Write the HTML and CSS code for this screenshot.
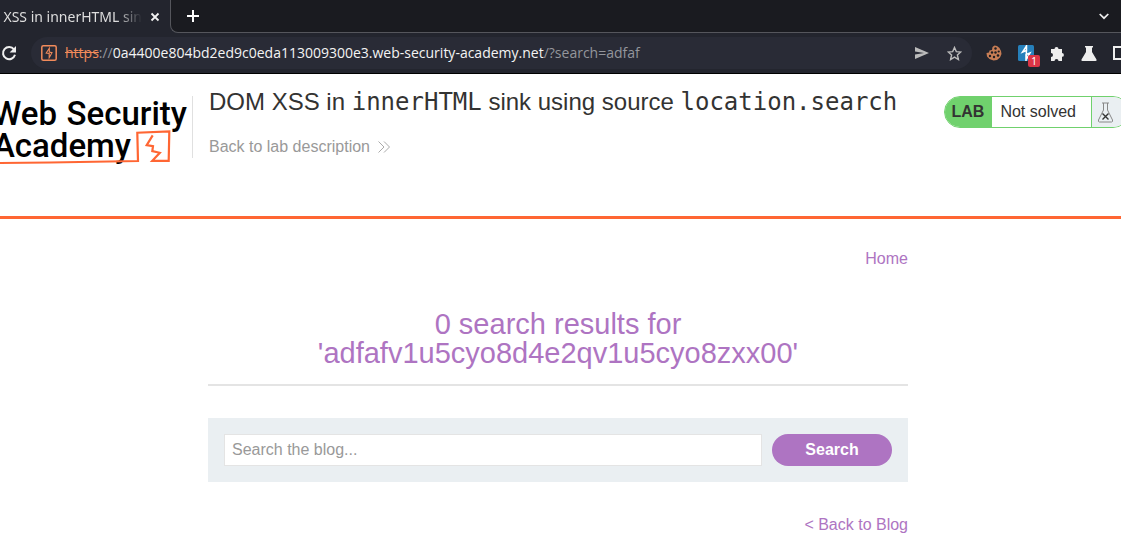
FILE: index.html
```
<!DOCTYPE html>
<html lang="en">
<head>
<meta charset="utf-8">
<title>DOM XSS in innerHTML sink using source location.search</title>
<link rel="stylesheet" href="styles.css">
</head>
<body>
<div class="browser">
  <div class="tabs">
    <div class="tab">
      <span class="tab-title">DOM XSS in innerHTML sin</span>
      <button class="icon-button" aria-label="Close tab"><svg width="10" height="10" viewBox="0 0 10 10"><path d="M1.5 1.5l7 7M8.5 1.5l-7 7" stroke="#f2f2f2" stroke-width="1.8"/></svg></button>
    </div>
    <div class="strip">
      <button class="icon-button" aria-label="New tab"><svg width="12" height="12" viewBox="0 0 12 12"><path d="M6 0v12M0 6h12" stroke="#fff" stroke-width="2"/></svg></button>
      <button class="icon-button" aria-label="Search tabs"><svg width="10" height="7" viewBox="0 0 10 7"><path d="M.7 1L5 5.2 9.3 1" fill="none" stroke="#eee" stroke-width="1.7"/></svg></button>
    </div>
  </div>
  <div class="toolbar">
    <button class="icon-button" aria-label="Reload"><svg width="16" height="16" viewBox="0 0 16 16"><path d="M13 4.4A6.1 6.1 0 1 0 14 9.8" fill="none" stroke="#eee" stroke-width="2"/><path d="M15 1v6.4H8.6z" fill="#eee"/></svg></button>
    <div class="address">
      <svg width="16" height="16" viewBox="0 0 16 16"><rect x=".8" y=".8" width="14.4" height="14.4" rx="1.5" fill="none" stroke="#f28b5b" stroke-width="1.5"/><path d="M8.300 3.200L5.200 8l3 .5v4.200L11 7.700 8.300 7z" fill="none" stroke="#f28b5b" stroke-width="1.100"/></svg>
      <span class="url"><span class="scheme">https</span><span class="dim">://</span>0a4400e804bd2ed9c0eda113009300e3.web-security-academy.net<span class="dim">/?search=adfaf</span></span>
      <button class="icon-button" aria-label="Share"><svg width="14" height="12" viewBox="0 0 14 12"><path d="M0 0l14 6-14 6V7.5L9 6 0 4.5z" fill="#bbb"/></svg></button>
      <button class="icon-button" aria-label="Bookmark"><svg width="15" height="15" viewBox="0 0 15 15"><path d="M7.5 1.5l1.8 4.1 4.5.4-3.4 3 1 4.5-3.9-2.4-3.9 2.4 1-4.5L1.200 6l4.500-.4z" fill="none" stroke="#bbb" stroke-width="1.400"/></svg></button>
    </div>
    <div class="extensions">
      <button class="icon-button" aria-label="Cookies"><svg width="16" height="16" viewBox="0 0 16 16"><path d="M8.500.5l2.500.5 2.500 2 1.500 3 .5 3-1.500 3.500-3 2.500-3.500.5-4-1.500L1 11.500.5 8l2.500-.5.5-2L6 5l.5-3z" fill="#c77d55"/><g fill="#1d1d22"><circle cx="9.500" cy="3.500" r="1.200"/><circle cx="6" cy="7.500" r="1.200"/><circle cx="9.500" cy="7.500" r="1.200"/><circle cx="12.700" cy="6.500" r="1.100"/><circle cx="4" cy="11" r="1.200"/><circle cx="8" cy="12" r="1.200"/><circle cx="12" cy="10.500" r="1.300"/></g></svg></button>
      <button class="icon-button burp" aria-label="Burp Suite, 1 alert"><svg width="16" height="16" viewBox="0 0 16 16"><rect width="16" height="16" rx="1.500" fill="#2680bb"/><path d="M8.500 0v5.500L4.500 7.200 8.200 1.500M8.500 5L8 16V9.500l4-1.500L8.500 14" fill="none" stroke="#fff" stroke-width="1.500"/></svg><span class="count">1</span></button>
      <button class="icon-button" aria-label="Extensions"><svg width="15" height="15" viewBox="0 0 15 15"><path d="M1 3h3.500a2 2 0 1 1 4 0H12v4a1.800 1.800 0 1 1 0 3.800V15H8.500a2 2 0 0 0-4 0H1v-4a2 2 0 0 0 0-4z" fill="#eee"/></svg></button>
      <button class="icon-button" aria-label="Experiments"><svg width="16" height="15" viewBox="0 0 16 15"><path d="M4 0h8v1.500h-1V6l4.500 7.500q.5 1.500-1 1.500h-13Q0 15 .5 13.500L5 6V1.500H4z" fill="#eee"/></svg></button>
      <button class="icon-button" aria-label="Side panel"><svg width="16" height="14" viewBox="0 0 16 14"><path d="M1 1h14v12H1z" fill="none" stroke="#eee" stroke-width="2"/></svg></button>
    </div>
  </div>
</div>

<header class="lab-header">
  <a class="logo" href="#" aria-label="Web Security Academy">
    <svg width="192" height="72" viewBox="0 0 192 72">
      <text class="logo-text" x="57" y="29" text-anchor="end">Web</text>
      <text class="logo-text" x="187" y="29" text-anchor="end">Security</text>
      <text class="logo-text" x="131" y="61" text-anchor="end">Academy</text>
      <path d="M0 67l50-.5 88-1.500-.7-28.300 32-1.200-.6 29.300h-16.400l7.500-8-7.500-1.700.7-5-6.300-1 6-9.700" fill="none" stroke="#ff6633" stroke-width="2.200"/>
    </svg>
  </a>
  <div class="heading">
    <h2 class="title">DOM XSS in <code>innerHTML</code> sink using source <code>location.search</code></h2>
    <a class="back" href="#">Back to lab description <svg width="12" height="12" viewBox="0 0 12 12"><path d="M.5.5L6 6 .5 11.500M6 .5L11.500 6 6 11.500" fill="none" stroke="#aaa"/></svg></a>
  </div>
  <div class="status">
    <span class="lab">LAB</span>
    <span class="state">Not solved</span>
    <span class="flask"><svg width="18" height="21" viewBox="0 0 18 21"><path d="M5 1h7M6.500 1v7L1.500 18q-.5 2 1 2h12q1.500 0 1-2L10.500 8V1" fill="none" stroke="#888"/><path d="M5.500 11.500l6 6M11.500 11.500l-6 6" stroke="#333" stroke-width="1.400"/></svg></span>
  </div>
</header>

<main class="blog">
  <nav class="nav"><a href="#">Home</a></nav>
  <h1 class="results">0 search results for 'adfafv1u5cyo8d4e2qv1u5cyo8zxx00'</h1>
  <form class="search">
    <input class="query" type="text" placeholder="Search the blog..." aria-label="Search the blog">
    <button class="submit" type="button">Search</button>
  </form>
  <a class="return" href="#">&lt; Back to Blog</a>
</main>
</body>
</html>
```
FILE: styles.css
```
* { box-sizing: border-box; }
body {
  margin: 0;
  background: #fff;
  color: #333332;
  font: 16px/20px "Liberation Sans", Arial, sans-serif;
  overflow: hidden;
}
a { color: #ae74c2; text-decoration: none; }
svg { display: block; flex: none; }
.icon-button {
  display: flex;
  flex: none;
  padding: 0;
  border: 0;
  background: none;
}

.browser {
  background: #23252e;
  border-bottom: 1px solid #000;
  font-family: "Noto Sans", sans-serif;
  font-size: 14px;
}
.tabs { display: flex; height: 33px; background: #23252e; }
.tab {
  display: flex;
  align-items: center;
  justify-content: flex-end;
  gap: 8px;
  width: 170px;
  padding-right: 10px;
}
.tab-title {
  display: flex;
  justify-content: flex-end;
  width: 142px;
  overflow: hidden;
  white-space: nowrap;
  color: #dedede;
  -webkit-mask-image: linear-gradient(to right, #000 82%, transparent);
  mask-image: linear-gradient(to right, #000 82%, transparent);
}
.strip {
  flex: 1;
  display: flex;
  align-items: center;
  justify-content: space-between;
  padding: 0 12px 0 16px;
  background: #1a1b20;
  border-left: 1px solid #55565c;
  border-bottom: 1px solid #55565c;
  border-bottom-left-radius: 8px;
}
.toolbar {
  display: flex;
  align-items: center;
  gap: 14px;
  height: 40px;
  padding-left: 1px;
  overflow: hidden;
}
.address {
  flex: 1;
  display: flex;
  align-items: center;
  gap: 18px;
  height: 32px;
  padding: 0 10px;
  border-radius: 16px;
  background: #292b36;
}
.url {
  flex: 1;
  margin-left: -10px;
  white-space: nowrap;
  color: #f4f4f4;
  font-family: "Open Sans", "Noto Sans", sans-serif;
}
.scheme { color: #f28b5b; text-decoration: line-through; }
.dim { color: #94969c; }
.extensions { display: flex; align-items: center; gap: 16px; margin-right: -8px; }
.burp { position: relative; }
.count {
  position: absolute;
  left: 10px;
  top: 10px;
  width: 12px;
  border-radius: 2px;
  background: #dc3545;
  color: #fff;
  font: 10px/12px "Noto Sans", sans-serif;
  text-align: center;
}

.lab-header {
  display: flex;
  align-items: flex-start;
  height: 145px;
  padding-top: 22px;
  border-bottom: 3px solid #ff6633;
  overflow: hidden;
}
.logo { flex: none; }
.logo-text { font: 500 33px Roboto, sans-serif; fill: #000; }
.heading {
  flex: 1;
  padding-left: 16px;
  height: 62px;
  border-left: 1px solid #e0e0e0;
}
.title {
  margin: -9px 0 20px;
  font-size: 24px;
  line-height: 30px;
  font-weight: 400;
  white-space: nowrap;
}
.title code { font-family: "DejaVu Sans Mono", monospace; }
.back { display: flex; align-items: center; gap: 8px; color: #999; }
.status {
  display: flex;
  height: 32px;
  margin-right: -8px;
  border: 1px solid #70d16d;
  border-radius: 16px;
  overflow: hidden;
  line-height: 30px;
}
.lab { padding: 0 8px 0 7px; background: #70d16d; font-weight: 700; }
.state { padding: 0 15px 0 8px; }
.flask {
  display: flex;
  align-items: center;
  padding: 0 13px 0 5px;
  border-left: 1px solid #70d16d;
  background: #eaeff2;
}

.blog {
  display: flex;
  flex-direction: column;
  max-width: 705px;
  margin: 0 auto;
  padding: 30px 5px 0 0;
}
.nav, .return { text-align: right; }
.results {
  margin: 41px 0 32px;
  padding: 0 100px 16px;
  border-bottom: 2px solid #e4e4e4;
  color: #ae74c2;
  font-size: 29px;
  line-height: 29px;
  font-weight: 400;
  text-align: center;
}
.search {
  display: flex;
  gap: 10px;
  padding: 16px;
  margin-bottom: 33px;
  background: #eaeff2;
}
.query {
  flex: 1;
  height: 32px;
  padding: 0 7px;
  border: 1px solid #e4e4e4;
  background: #fff;
  color: #333332;
  font: inherit;
}
.query::placeholder { color: #999; }
.submit {
  width: 120px;
  height: 32px;
  padding: 0;
  border: 0;
  border-radius: 16px;
  background: #ae74c2;
  color: #fff;
  font: inherit;
  font-weight: 700;
}
```
